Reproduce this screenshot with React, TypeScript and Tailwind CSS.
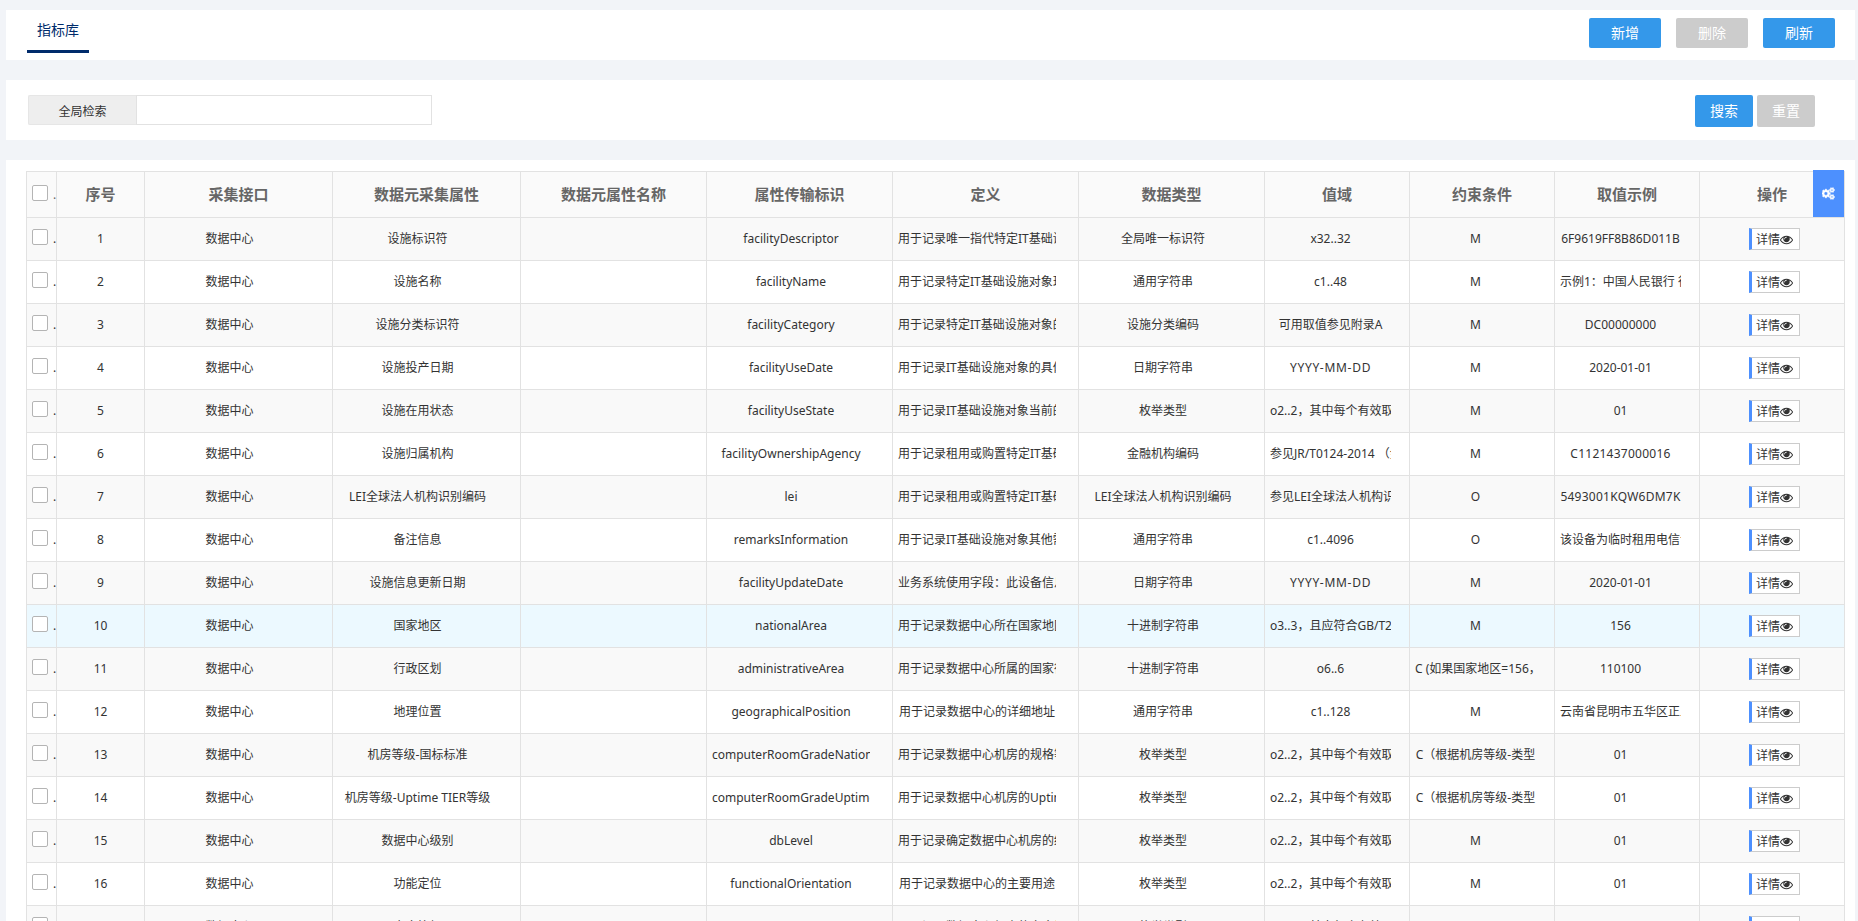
import { ReactNode, useState } from "react";

interface Indicator {
	attr: string;
	field: string;
	definition: string;
	type: string;
	range: string;
	rule: string;
	sample: string;
}

const ENUM_RANGE = "o2..2，其中每个有效取值";

const rows: Indicator[] = [
	{ attr: "设施标识符", field: "facilityDescriptor", definition: "用于记录唯一指代特定IT基础设施", type: "全局唯一标识符", range: "x32..32", rule: "M", sample: "6F9619FF8B86D011B" },
	{ attr: "设施名称", field: "facilityName", definition: "用于记录特定IT基础设施对象现行", type: "通用字符串", range: "c1..48", rule: "M", sample: "示例1：中国人民银行 行号" },
	{ attr: "设施分类标识符", field: "facilityCategory", definition: "用于记录特定IT基础设施对象的分类", type: "设施分类编码", range: "可用取值参见附录A", rule: "M", sample: "DC00000000" },
	{ attr: "设施投产日期", field: "facilityUseDate", definition: "用于记录IT基础设施对象的具体日期", type: "日期字符串", range: "YYYY-MM-DD", rule: "M", sample: "2020-01-01" },
	{ attr: "设施在用状态", field: "facilityUseState", definition: "用于记录IT基础设施对象当前的状态", type: "枚举类型", range: ENUM_RANGE, rule: "M", sample: "01" },
	{ attr: "设施归属机构", field: "facilityOwnershipAgency", definition: "用于记录租用或购置特定IT基础设施", type: "金融机构编码", range: "参见JR/T0124-2014 （金融", rule: "M", sample: "C1121437000016" },
	{ attr: "LEI全球法人机构识别编码", field: "lei", definition: "用于记录租用或购置特定IT基础设施", type: "LEI全球法人机构识别编码", range: "参见LEI全球法人机构识别", rule: "O", sample: "5493001KQW6DM7K" },
	{ attr: "备注信息", field: "remarksInformation", definition: "用于记录IT基础设施对象其他需要", type: "通用字符串", range: "c1..4096", rule: "O", sample: "该设备为临时租用电信设备" },
	{ attr: "设施信息更新日期", field: "facilityUpdateDate", definition: "业务系统使用字段：此设备信息更新", type: "日期字符串", range: "YYYY-MM-DD", rule: "M", sample: "2020-01-01" },
	{ attr: "国家地区", field: "nationalArea", definition: "用于记录数据中心所在国家地区代码", type: "十进制字符串", range: "o3..3，且应符合GB/T2", rule: "M", sample: "156" },
	{ attr: "行政区划", field: "administrativeArea", definition: "用于记录数据中心所属的国家行政", type: "十进制字符串", range: "o6..6", rule: "C (如果国家地区=156，", sample: "110100" },
	{ attr: "地理位置", field: "geographicalPosition", definition: "用于记录数据中心的详细地址", type: "通用字符串", range: "c1..128", rule: "M", sample: "云南省昆明市五华区正义路" },
	{ attr: "机房等级-国标标准", field: "computerRoomGradeNational", definition: "用于记录数据中心机房的规格等级", type: "枚举类型", range: ENUM_RANGE, rule: "C（根据机房等级-类型", sample: "01" },
	{ attr: "机房等级-Uptime TIER等级", field: "computerRoomGradeUptime", definition: "用于记录数据中心机房的Uptime等级", type: "枚举类型", range: ENUM_RANGE, rule: "C（根据机房等级-类型", sample: "01" },
	{ attr: "数据中心级别", field: "dbLevel", definition: "用于记录确定数据中心机房的级别", type: "枚举类型", range: ENUM_RANGE, rule: "M", sample: "01" },
	{ attr: "功能定位", field: "functionalOrientation", definition: "用于记录数据中心的主要用途", type: "枚举类型", range: ENUM_RANGE, rule: "M", sample: "01" },
	{ attr: "安全等级", field: "securityLevel", definition: "用于记录数据中心机房的安全等级", type: "枚举类型", range: ENUM_RANGE, rule: "M", sample: "01" },
];

const headers = ["序号", "采集接口", "数据元采集属性", "数据元属性名称", "属性传输标识", "定义", "数据类型", "值域", "约束条件", "取值示例", "操作"];
const colWidths = [30, 88, 188, 188, 186, 186, 186, 186, 145, 145, 145, 145];

const EyeIcon = () => (
	<svg viewBox="0 0 1792 1792" className="w-[13px] h-[13px] shrink-0" fill="currentColor">
		<path d="M1664 960q-152-236-381-353 61 104 61 225 0 185-131.5 316.5t-316.5 131.5-316.5-131.5-131.5-316.5q0-121 61-225-229 117-381 353 133 205 333.5 326.5t434.5 121.5 434.5-121.5 333.5-326.5zm-720-384q0-20-14-34t-34-14q-125 0-214.5 89.5t-89.5 214.5q0 20 14 34t34 14 34-14 14-34q0-86 61-147t147-61q20 0 34-14t14-34zm848 384q0 34-20 69-140 230-376.5 368.5t-499.5 138.5-499.5-139-376.5-368q-20-35-20-69t20-69q140-229 376.5-368t499.5-139 499.5 139 376.5 368q20 35 20 69z" />
	</svg>
);

const CogsIcon = () => (
	<svg viewBox="0 0 1920 1792" className="w-[13px] h-[13px]" fill="currentColor" stroke="currentColor" strokeWidth="70">
		<path d="M832 896q0-106-75-181t-181-75-181 75-75 181 75 181 181 75 181-75 75-181zm768 512q0-52-38-90t-90-38-90 38-38 90q0 53 37.5 90.5t90.5 37.5 90.5-37.5 37.5-90.5zm0-1024q0-52-38-90t-90-38-90 38-38 90q0 53 37.5 90.5t90.5 37.5 90.5-37.5 37.5-90.5zm-384 421v185q0 10-7 19.5t-16 10.5l-155 24q-11 35-32 76 34 48 90 115 7 10 7 20 0 12-7 19-23 30-82.5 89.5t-78.5 59.5q-11 0-21-7l-115-90q-37 19-77 31-11 108-23 155-7 24-30 24h-186q-11 0-20-7.5t-10-17.5l-23-153q-34-10-75-31l-118 89q-7 7-20 7-11 0-21-8-144-133-144-160 0-9 7-19 10-14 41-53t47-61q-23-44-35-82l-152-24q-10-1-17-9.5t-7-19.5v-185q0-10 7-19.5t16-10.5l155-24q11-35 32-76-34-48-90-115-7-11-7-20 0-12 7-20 22-30 82-89t79-59q11 0 21 7l115 90q34-18 77-32 11-108 23-154 7-24 30-24h186q11 0 20 7.5t10 17.5l23 153q34 10 75 31l118-89q8-7 20-7 11 0 21 8 144 133 144 160 0 9-7 19-12 16-42 54t-45 60q23 48 34 82l152 23q10 2 17 10.5t7 19.5zm640 533v140q0 16-149 31-12 27-30 52 51 113 51 138 0 4-4 7-122 71-124 71-8 0-46-47t-52-68q-20 2-30 2t-30-2q-14 21-52 68t-46 47q-2 0-124-71-4-3-4-7 0-25 51-138-18-25-30-52-149-15-149-31v-140q0-16 149-31 13-29 30-52-51-113-51-138 0-4 4-7 4-2 35-20t59-34 30-16q8 0 46 46.5t52 67.5q20-2 30-2t30 2q51-71 92-112l6-2q4 0 124 70 4 3 4 7 0 25-51 138 17 23 30 52 149 15 149 31zm0-1024v140q0 16-149 31-12 27-30 52 51 113 51 138 0 4-4 7-122 71-124 71-8 0-46-47t-52-68q-20 2-30 2t-30-2q-14 21-52 68t-46 47q-2 0-124-71-4-3-4-7 0-25 51-138-18-25-30-52-149-15-149-31v-140q0-16 149-31 13-29 30-52-51-113-51-138 0-4 4-7 4-2 35-20t59-34 30-16q8 0 46 46.5t52 67.5q20-2 30-2t30 2q51-71 92-112l6-2q4 0 124 70 4 3 4 7 0 25-51 138 17 23 30 52 149 15 149 31z" />
	</svg>
);

const tracking = (text: string) => {
	if (text.startsWith("YYYY")) return "tracking-[0.7px]";
	if (/^[A-Z0-9]{14,15}$/.test(text)) return "tracking-[0.25px]";
	return "";
};

// Text is cut off hard at the edge of the cell, with no ellipsis
const Cell = ({ width, children }: { width: string; children?: ReactNode }) => (
	<td className="border border-[#e2e2e2] p-0">
		<div className={`ml-1 overflow-hidden pl-px whitespace-nowrap text-center ${width} ${typeof children === "string" ? tracking(children) : ""}`}>
			{children}
		</div>
	</td>
);

const Check = () => (
	<div className="flex h-5 gap-[5px] overflow-hidden pl-[5px]">
		<input type="checkbox" className="size-4 shrink-0 appearance-none rounded-xs border border-[#b4b4b4] bg-white checked:bg-[#4d90fe]" />
		<span className="w-[3px] shrink-0 overflow-hidden text-left leading-5">.</span>
	</div>
);

const App = () => {
	const [keyword, setKeyword] = useState("");

	return (
		<div className="flex h-[921px] flex-col gap-5 overflow-hidden bg-[#f2f4f8] pt-2.5 pr-[3px] pl-1.5 font-['Noto_Sans','Noto_Sans_CJK_SC',sans-serif] text-xs text-[#333]">
			<header className="flex h-[50px] shrink-0 justify-between bg-white pr-5 pl-[21px]">
				<div className="h-[43px] w-[62px] border-b-3 border-[#002b6b] text-center text-sm leading-10 text-[#002b6b]">指标库</div>
				<div className="flex gap-[15px] pt-2 text-sm text-white">
					<button className="h-[30px] w-[72px] rounded-xs bg-[#3498ea]">新增</button>
					<button className="h-[30px] w-[72px] rounded-xs bg-[#ccc]">删除</button>
					<button className="h-[30px] w-[72px] rounded-xs bg-[#3498ea]">刷新</button>
				</div>
			</header>

			<section className="flex h-[60px] shrink-0 justify-between bg-white pt-[15px] pr-10 pl-[22px]">
				<div className="flex h-[30px]">
					<label htmlFor="keyword" className="w-[108px] rounded-l-xs border border-r-0 border-[#e6e6e6] bg-[#eee] text-center leading-8">
						全局检索
					</label>
					<input
						id="keyword"
						className="w-[296px] border border-[#e2e2e2] px-2 outline-none"
						value={keyword}
						onChange={(e) => setKeyword(e.target.value)}
					/>
				</div>
				<div className="flex gap-1 text-sm text-white">
					<button className="h-8 w-[58px] rounded-xs bg-[#3498ea]">搜索</button>
					<button className="h-8 w-[58px] rounded-xs bg-[#ccc]" onClick={() => setKeyword("")}>重置</button>
				</div>
			</section>

			<main className="relative grow bg-white pt-[11px] pl-5">
				<table className="w-[1819px] table-fixed border-collapse">
					<colgroup>
						{colWidths.map((w, i) => (
							<col key={i} style={{ width: w }} />
						))}
					</colgroup>
					<thead>
						<tr className="h-[46px] bg-[#fafafa] text-[15px] text-[#666]">
							<th className="border border-[#e2e2e2] p-0 text-xs font-normal"><Check /></th>
							{headers.map((h) => (
								<th key={h} className="border border-[#e2e2e2] p-0 pb-0.5 font-bold">{h}</th>
							))}
						</tr>
					</thead>
					<tbody>
						{rows.map((row, i) => (
							<tr key={row.field} className={`h-[43px] ${i === 9 ? "bg-[#ecf9ff]" : i % 2 ? "bg-white" : "bg-[#f9f9f9]"}`}>
								<td className="border border-[#e2e2e2] p-0"><Check /></td>
								<td className="border border-[#e2e2e2] p-0 text-center">{i + 1}</td>
								<Cell width="w-[160px]">数据中心</Cell>
								<Cell width="w-[160px]">{row.attr}</Cell>
								<Cell width="w-[159px]" />
								<Cell width="w-[159px]">{row.field}</Cell>
								<Cell width="w-[159px]">{row.definition}</Cell>
								<Cell width="w-[159px]">{row.type}</Cell>
								<Cell width="w-[122px]">{row.range}</Cell>
								<Cell width="w-[122px]">{row.rule}</Cell>
								<Cell width="w-[122px]">{row.sample}</Cell>
								<td className="border border-[#e2e2e2] p-0">
									<button className="ml-[49px] flex h-[22px] w-[51px] items-center border border-l-3 border-[#ccc] border-l-[#4d90fe] bg-white pt-px pl-1">
										<span className="shrink-0">详情</span>
										<EyeIcon />
									</button>
								</td>
							</tr>
						))}
					</tbody>
				</table>
				<button className="absolute top-2.5 right-[11px] flex h-[47px] w-[31px] items-center justify-center bg-[#4d90fe] text-white">
					<CogsIcon />
				</button>
			</main>
		</div>
	);
};

export default App;
